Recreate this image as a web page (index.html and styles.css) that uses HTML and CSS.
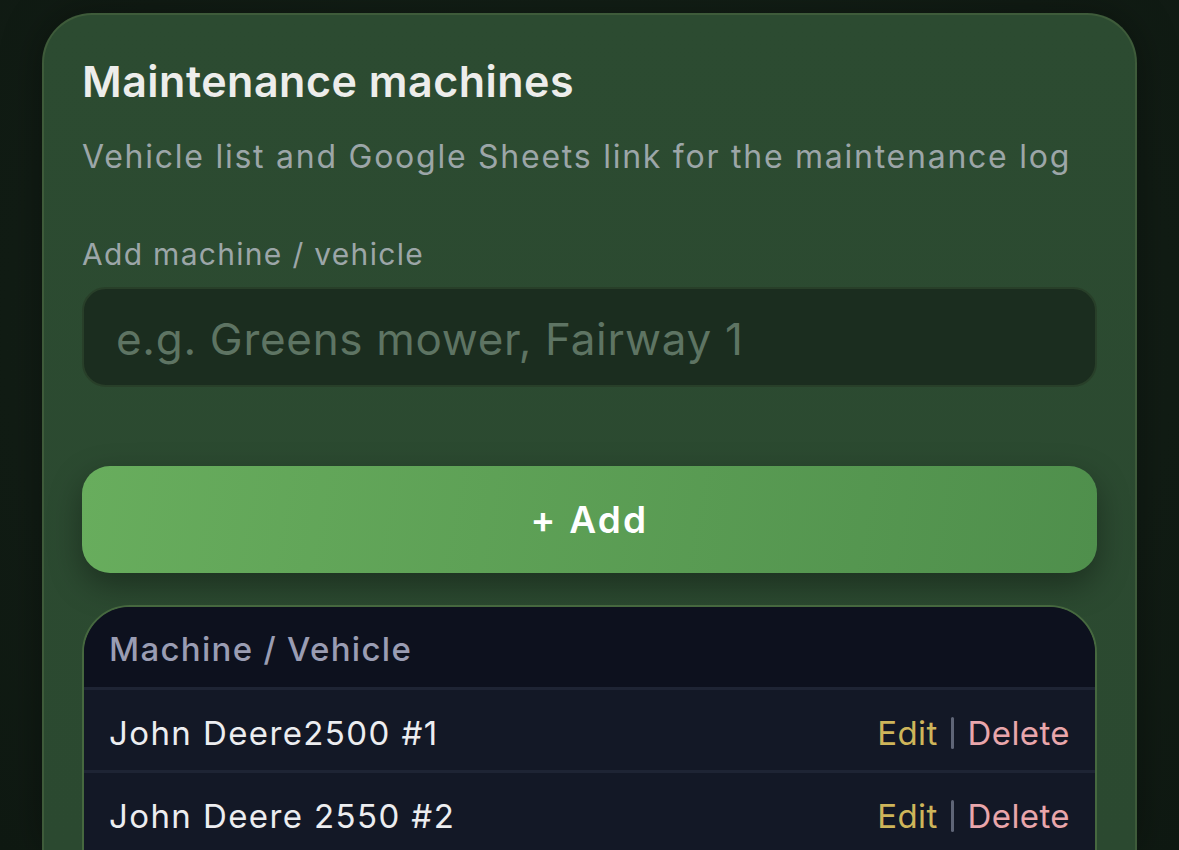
FILE: index.html
```html
<!DOCTYPE html>
<html lang="en">
<head>
<meta charset="utf-8">
<title>Maintenance machines</title>
<link rel="stylesheet" href="styles.css">
</head>
<body>
<main class="page">
  <section class="card">
    <h1 class="title">Maintenance machines</h1>
    <p class="subtitle">Vehicle list and Google Sheets link for the maintenance log</p>
    <label class="label" for="machine">Add machine / vehicle</label>
    <input class="input" id="machine" type="text" placeholder="e.g. Greens mower, Fairway 1">
    <button class="add-btn" type="button">+ Add</button>
    <div class="table">
      <div class="thead">Machine / Vehicle</div>
      <div class="row">
        <span class="name">John Deere2500 #1</span>
        <span class="actions"><a class="edit">Edit</a><span class="sep"></span><a class="delete">Delete</a></span>
      </div>
      <div class="row">
        <span class="name">John Deere 2550 #2</span>
        <span class="actions"><a class="edit">Edit</a><span class="sep"></span><a class="delete">Delete</a></span>
      </div>
    </div>
  </section>
</main>
</body>
</html>
```
FILE: styles.css
```css
* { box-sizing: border-box; }
html, body {
  margin: 0;
  height: 100%;
  overflow: hidden;
}
body {
  background: radial-gradient(ellipse at 50% 40%, #15251a 0%, #111c14 70%, #0f1912 100%);
  font-family: Inter, "Noto Sans", "Liberation Sans", sans-serif;
  color: #ececec;
}
.page {
  padding: 13px 42px 0 42px;
}
.card {
  display: flex;
  flex-direction: column;
  background: linear-gradient(180deg, #2c4b31 0%, #2b4930 100%);
  border: 2px solid #3e5b3a;
  border-bottom: none;
  border-radius: 50px 50px 0 0;
  padding: 40px 38px 0 38px;
  box-shadow: 0 0 40px rgba(0, 0, 0, 0.35);
  height: 837px;
  overflow: hidden;
}
.title {
  margin: 0;
  font-size: 43px;
  line-height: 52px;
  font-weight: 600;
  color: #ededeb;
  letter-spacing: 0.5px;
}
.subtitle {
  margin: 30px 0 0 0;
  font-size: 32px;
  line-height: 40px;
  color: #9ca6a8;
  letter-spacing: 1.75px;
}
.label {
  margin-top: 59px;
  font-size: 30px;
  line-height: 36px;
  color: #9ca6a8;
  letter-spacing: 1.3px;
}
.input {
  margin-top: 15px;
  height: 100px;
  width: 100%;
  flex-shrink: 0;
  background: #1b2d1f;
  border: 2px solid #283f29;
  border-radius: 24px;
  padding: 4px 32px 0 32px;
  font-family: inherit;
  font-size: 44px;
  letter-spacing: 0.7px;
  color: #e6e6e6;
  outline: none;
}
.input::placeholder { color: #5e7463; }
.add-btn {
  margin-top: 79px;
  height: 107px;
  width: 100%;
  flex-shrink: 0;
  border: none;
  border-radius: 28px;
  background: linear-gradient(100deg, #68ad5d 0%, #4f8f4c 100%);
  box-shadow: 0 12px 32px rgba(0, 0, 0, 0.35);
  color: #ffffff;
  font-family: inherit;
  font-size: 37px;
  font-weight: 600;
  letter-spacing: 2.2px;
  padding: 0;
}
.table {
  margin-top: 32px;
  flex-shrink: 0;
  border: 2px solid #46683f;
  border-radius: 48px 48px 0 0;
  overflow: hidden;
  background: #131826;
}
.thead {
  height: 83px;
  display: flex;
  align-items: center;
  padding: 4px 25px 0 25px;
  background: #0d111e;
  font-size: 33px;
  font-weight: 500;
  letter-spacing: 1.3px;
  color: #9a9db3;
  border-bottom: 3px solid #1e2434;
}
.row {
  height: 83px;
  display: flex;
  align-items: center;
  justify-content: space-between;
  padding: 6px 25px 0 25px;
  border-bottom: 3px solid #1e2434;
  font-size: 33px;
}
.name {
  color: #ecedf0;
  letter-spacing: 1.4px;
}
.actions {
  display: flex;
  align-items: center;
  letter-spacing: 0.4px;
}
.edit { color: #ceb55a; }
.delete { color: #e9a6ab; }
.sep {
  width: 3px;
  height: 32px;
  border-radius: 2px;
  background: #5f6577;
  margin: 0 14px 0 13px;
}
```
